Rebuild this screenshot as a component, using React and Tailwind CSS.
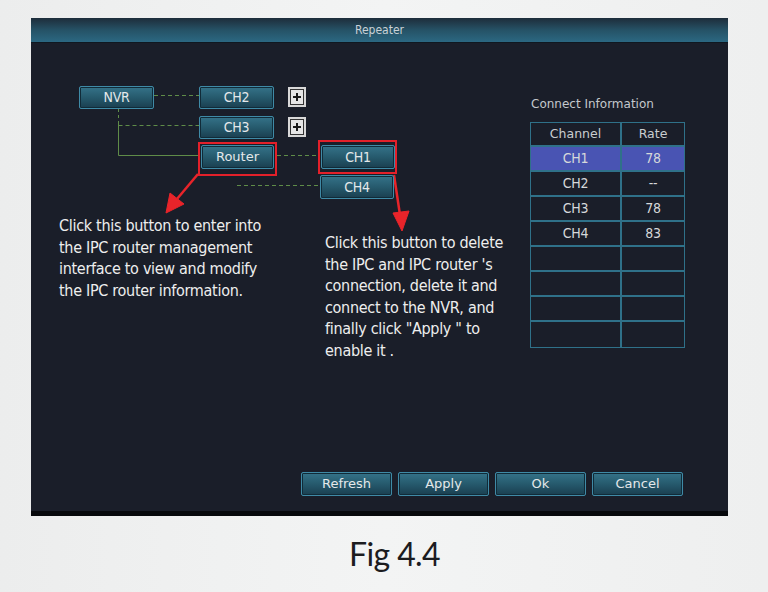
import React from 'react';

// DVR style button
function DvrButton({ label, className = '', font = 'cond' }) {
  return (
    <div
      className={`flex items-center justify-center rounded-[2px] border border-[#3f8aa6] bg-gradient-to-b from-[#357389] via-[#265a6d] to-[#1a3f50] shadow-[inset_0_0_0_1px_#112b38] text-[#e4e8ea] ${
        font === 'cond'
          ? "text-[14px] tracking-[-0.2px] font-['DejaVu_Sans_Condensed',sans-serif]"
          : "text-[13px] font-['DejaVu_Sans','Liberation_Sans',sans-serif]"
      } ${className}`}
    >
      {label}
    </div>
  );
}

function PlusBox({ className = '' }) {
  return (
    <div className={`absolute w-[18px] h-[20px] bg-[#d8d8d8] p-[2px] ${className}`}>
      <div className="w-full h-full border border-[#333] bg-[#e6e6e6] flex items-center justify-center">
        <svg width="10" height="10" viewBox="0 0 10 10">
          <path d="M5 1v8M1 5h8" stroke="#1a1a1a" strokeWidth="2" />
        </svg>
      </div>
    </div>
  );
}

const rows = [
  { ch: 'CH1', rate: '78', active: true },
  { ch: 'CH2', rate: '--' },
  { ch: 'CH3', rate: '78' },
  { ch: 'CH4', rate: '83' },
  { ch: '', rate: '' },
  { ch: '', rate: '' },
  { ch: '', rate: '' },
  { ch: '', rate: '' },
];

export default function App() {
  const note = "font-['DejaVu_Sans_Condensed',sans-serif] text-[16px] tracking-[-0.3px] text-[#eeeeee]";
  return (
    <div className="w-[768px] h-[592px] bg-gradient-to-r from-[#eceded] via-[#f3f4f4] to-[#eeefef] pl-[31px] pt-[18px] flex flex-col">
      {/* Main panel */}
      <div className="w-[697px] h-[498px] bg-[#1a1e29] border-b-[5px] border-[#07090c] flex flex-col">
        <div className="h-[25px] bg-gradient-to-b from-[#1d2d3b] via-[#255266] to-[#2b6882] border-b border-[#101820] flex items-center justify-center text-[12px] text-[#c9d1d6] font-['DejaVu_Sans_Condensed','Liberation_Sans',sans-serif]">
          Repeater
        </div>

        <div className="flex-1 flex flex-col">
          <div className="flex-1 flex">
            {/* Diagram canvas */}
            <div className="relative flex-1">
              <svg className="absolute left-0 top-0" width="460" height="230">
                <g stroke="#5f8c48" strokeWidth="1" fill="none">
                  <path d="M123 52.5H168" strokeDasharray="4 3" />
                  <path d="M87.5 66V80" strokeDasharray="3 3" />
                  <path d="M87.5 82.5H168" strokeDasharray="4 3" />
                  <path d="M87.5 80V112.5H168" />
                  <path d="M246 112.5H287" strokeDasharray="4 3" />
                  <path d="M206 142.5H289" strokeDasharray="4 3" />
                </g>
                <g stroke="#e8242a" strokeWidth="2.5" fill="#e8242a">
                  <path d="M167 131L146 156" />
                  <path d="M135 170L139 150L153 161Z" strokeWidth="1" />
                  <path d="M363 132L369 172" />
                  <path d="M371 188L362 170L378 168Z" strokeWidth="1" />
                </g>
              </svg>

              <DvrButton label="NVR" className="absolute left-[48px] top-[43px] w-[75px] h-[23px]" />
              <DvrButton label="CH2" className="absolute left-[168px] top-[43px] w-[75px] h-[23px]" />
              <PlusBox className="left-[257px] top-[44px]" />
              <DvrButton label="CH3" className="absolute left-[168px] top-[73px] w-[75px] h-[23px]" />
              <PlusBox className="left-[257px] top-[74px]" />

              <div className="absolute left-[167px] top-[99px] w-[79px] h-[34px] border-2 border-[#e3202a] p-[1px]">
                <DvrButton label="Router" font="wide" className="w-[73px] h-[24px]" />
              </div>
              <div className="absolute left-[287px] top-[97px] w-[79px] h-[34px] border-2 border-[#e3202a] pt-[3px] pl-[1px]">
                <DvrButton label="CH1" className="w-[74px] h-[24px]" />
              </div>
              <DvrButton label="CH4" className="absolute left-[289px] top-[132px] w-[74px] h-[24px]" />

              <div className={`absolute left-[28px] top-[172px] leading-[21.5px] ${note}`}>
                <p>Click this button to enter into</p>
                <p>the IPC router management</p>
                <p>interface to view and modify</p>
                <p>the IPC router information.</p>
              </div>
              <div className={`absolute left-[294px] top-[189px] leading-[21.5px] ${note}`}>
                <p>Click this button to delete</p>
                <p>the IPC and IPC router 's</p>
                <p>connection, delete it and</p>
                <p>connect to the NVR, and</p>
                <p>finally click "Apply " to</p>
                <p>enable it .</p>
              </div>
            </div>

            {/* Connect information */}
            <div className="w-[155px] mr-[43px] pt-[53px] flex flex-col">
              <div className="text-[12px] text-[#c4c8cc] font-['DejaVu_Sans','Liberation_Sans',sans-serif] pl-[1px] h-[18px] leading-[16px]">
                Connect Information
              </div>
              <div className="mt-[8px] border border-[#2f7189]">
                <div className="flex h-[24px] border-b-2 border-[#2f7189] text-[12.5px] text-[#c9cdd0] font-['DejaVu_Sans','Liberation_Sans',sans-serif]">
                  <div className="w-[91px] border-r-2 border-[#2f7189] flex items-center justify-center">Channel</div>
                  <div className="flex-1 flex items-center justify-center">Rate</div>
                </div>
                {rows.map((r, i) => (
                  <div
                    key={i}
                    className={`flex h-[25px] text-[14px] tracking-[-0.2px] text-[#d6d8da] font-['DejaVu_Sans_Condensed',sans-serif] ${
                      i < rows.length - 1 ? 'border-b-2 border-[#2f7189]' : ''
                    } ${r.active ? 'bg-[#4954b3]' : ''}`}
                  >
                    <div className="w-[91px] border-r-2 border-[#2f7189] flex items-center justify-center">{r.ch}</div>
                    <div className="flex-1 flex items-center justify-center">{r.rate}</div>
                  </div>
                ))}
              </div>
            </div>
          </div>

          {/* Bottom buttons */}
          <div className="flex justify-end gap-[6px] pr-[45px] pb-[15px]">
            {['Refresh', 'Apply', 'Ok', 'Cancel'].map((b) => (
              <DvrButton key={b} label={b} font="wide" className="w-[91px] h-[24px]" />
            ))}
          </div>
        </div>
      </div>

      <div className="pl-[318px] pt-[18px] text-[32px] leading-[40px] tracking-[-0.6px] text-[#1c1c1f] font-['Lato','Open_Sans',sans-serif]">
        Fig 4.4
      </div>
    </div>
  );
}
